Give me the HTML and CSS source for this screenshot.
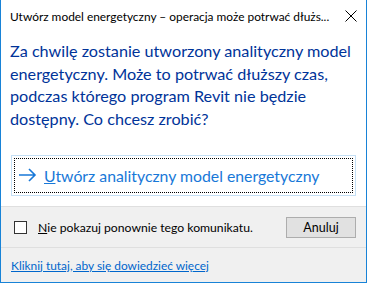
FILE: index.html
```html
<!DOCTYPE html>
<html>
<head>
	<title>Utwórz model energetyczny</title>
	<link rel="stylesheet" href="styles.css">
</head>
<body>
	<div class="dialog">
		<!-- pasek tytułu -->
		<div class="titlebar">
			<span class="title">Utwórz model energetyczny – operacja może potrwać dłużs...</span>
			<svg class="close" width="12" height="12" viewBox="0 0 12 12">
				<path d="M0.5 0.5 L11.5 11.5 M11.5 0.5 L0.5 11.5" stroke="#000" stroke-width="1" fill="none"/>
			</svg>
		</div>
		<!-- treść -->
		<div class="content">
			<p class="instruction">Za chwilę zostanie utworzony analityczny model<br>energetyczny. Może to potrwać dłuższy czas,<br>podczas którego program Revit nie będzie<br>dostępny. Co chcesz zrobić?</p>
			<div class="command">
				<div class="focus">
					<svg class="arrow" width="18" height="14" viewBox="0 0 18 14">
						<path d="M0 7 H16 M10 1 L16 7 L10 13" stroke="#1878d8" stroke-width="1.6" fill="none"/>
					</svg>
					<span class="cmdText"><u>U</u>twórz analityczny model energetyczny</span>
				</div>
			</div>
		</div>
		<!-- stopka -->
		<div class="footer">
			<div class="row">
				<label class="check"><span class="box"></span><span><u>N</u>ie pokazuj ponownie tego komunikatu.</span></label>
				<button class="cancel" type="button">Anuluj</button>
			</div>
			<div class="more">
				<a href="#">Kliknij tutaj, aby się dowiedzieć więcej</a>
			</div>
		</div>
	</div>
</body>
</html>
```
FILE: styles.css
```css
*{
	margin: 0;
	padding: 0;
	box-sizing: border-box;
}
body{
	font-family: Lato, "Noto Sans", sans-serif;
	background: #fff;
}
.dialog{
	width: 367px;
	height: 283px;
	border: 1px solid #1883d7;
	border-top: none;
	background: #fff;
	display: flex;
	flex-direction: column;
}
.titlebar{
	height: 32px;
	display: flex;
	align-items: center;
	justify-content: space-between;
	padding: 0 9px 0 9px;
}
.title{
	font-size: 11.9px;
	color: #000;
	white-space: nowrap;
}
.close{
	flex-shrink: 0;
}
.content{
	padding: 8px 10px 0 9px;
	height: 174px;
}
.instruction{
	font-size: 16.2px;
	line-height: 22.7px;
	color: #003399;
	white-space: nowrap;
}
.command{
	margin-top: 24px;
	margin-left: 1px;
	width: 345px;
	height: 41px;
	border: 1px solid #c4dff5;
	padding: 2px;
}
.focus{
	height: 100%;
	border: 1px dotted #000;
	display: flex;
	align-items: center;
	padding-left: 4px;
}
.arrow{
	margin-right: 7px;
}
.cmdText{
	font-size: 15.8px;
	color: #1878d8;
}
.cmdText u{
	text-decoration-thickness: 1px;
}
.footer{
	flex: 1;
	background: #f0f0f0;
	border-top: 1px solid #dfdfdf;
	display: flex;
	flex-direction: column;
}
.row{
	height: 41px;
	display: flex;
	align-items: center;
	justify-content: space-between;
	padding: 0 10px 0 13px;
	border-bottom: 1px solid #dfdfdf;
}
.check{
	display: flex;
	align-items: center;
	font-size: 12.2px;
	color: #000;
}
.box{
	width: 13px;
	height: 13px;
	border: 1px solid #333;
	background: #fff;
	margin-right: 11px;
}
.cancel{
	width: 70px;
	height: 21px;
	background: #e1e1e1;
	border: 1px solid #adadad;
	font-family: inherit;
	font-size: 12.5px;
	color: #000;
}
.more{
	flex: 1;
	display: flex;
	align-items: center;
	padding-left: 10px;
}
.more a{
	font-size: 11.9px;
	color: #0066cc;
}
```
